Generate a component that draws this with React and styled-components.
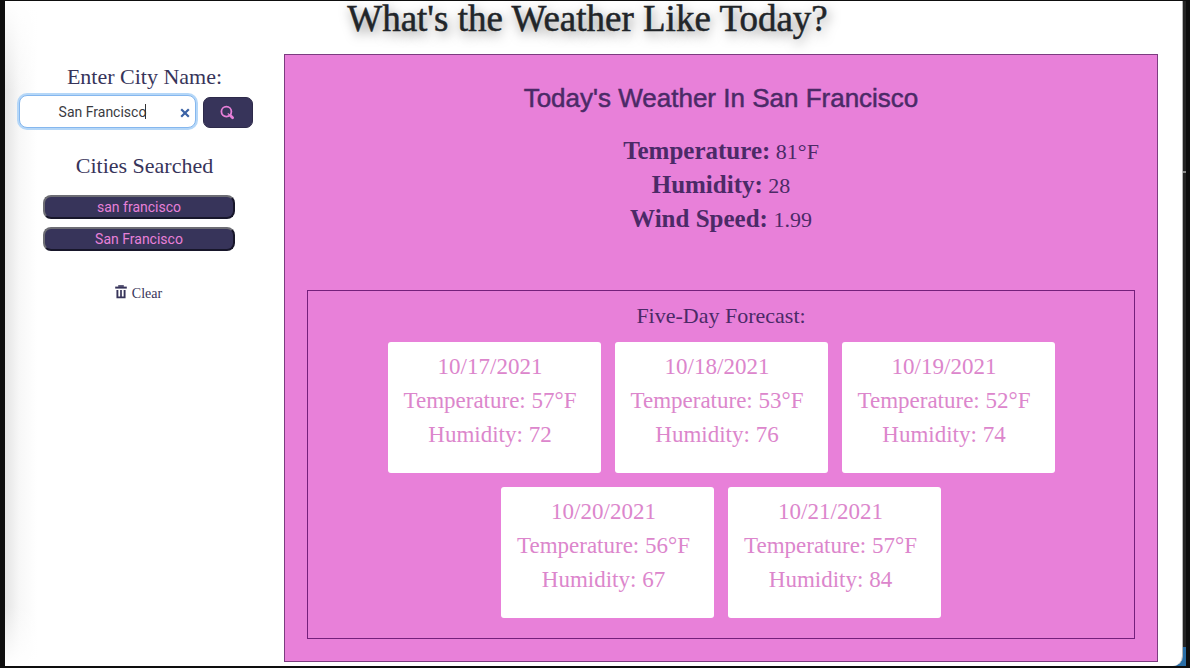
import React, { useState } from "react";
import styled, { createGlobalStyle } from "styled-components";

const serif = `Georgia, "Liberation Serif", serif`;
const sans = `Roboto, "Liberation Sans", sans-serif`;
const ink = "#37345a";
const pink = "#e880d9";
const plum = "#4b2a67";

const GlobalStyle = createGlobalStyle`
  *, *::before, *::after { box-sizing: border-box; }
  body { margin: 0; background: #0e0e0e; font-family: ${serif}; color: ${ink}; }
  h1, h2, h3, p, ul { margin: 0; padding: 0; font-weight: 400; }
  button, input { font: inherit; }
`;

const Desktop = styled.div`
  min-height: 100vh;
  display: flex;
  padding: 1px 4px 2px 5px;
  background: #0e0e0e;
`;

const Backdrop = styled.div`
  flex: 1;
  display: flex;
  padding-right: 3px;
  background: linear-gradient(to top, #2a6ea6 19px, #242424 19px);
`;

const Window = styled.div`
  flex: 1;
  border-right: 1px solid #b5b5b5;
  border-bottom-right-radius: 10px;
  background:
    linear-gradient(to top, #fff, rgba(255, 255, 255, 0) 60px),
    linear-gradient(to bottom, #fff, rgba(255, 255, 255, 0) 90px),
    linear-gradient(to right, #e4e4e4, #f7f7f7 14px, #fff 32px),
    #fff;
`;

const Edge = styled.span`
  position: absolute;
  right: 4px;
  top: 171px;
  width: 3px;
  height: 2px;
  background: #8a8a8a;
`;

const Title = styled.h1`
  padding-right: 12px;
  margin-bottom: 17px;
  text-align: center;
  font-size: 37px;
  line-height: 36px;
  color: #212529;
  -webkit-text-stroke: 0.5px #212529;
  text-shadow: 2px 4px 12px rgba(0, 0, 0, 0.5);
`;

const Columns = styled.div`
  display: grid;
  grid-template-columns: 279px 1fr;
  padding: 0 24px 4px 0;
`;

const Sidebar = styled.aside`
  padding-top: 10px;
  text-align: center;
`;

const Heading = styled.h3`
  font-size: 22px;
  line-height: 26px;
`;

const Label = styled(Heading).attrs({ as: "label", htmlFor: "city" })`
  display: block;
`;

const SearchForm = styled.form`
  display: flex;
  align-items: flex-end;
  gap: 7px;
  margin: 5px 0 25px 14px;
`;

const Field = styled.div`
  position: relative;
  width: 177px;
`;

const CityInput = styled.input`
  display: block;
  width: 100%;
  height: 33px;
  padding: 0 24px 0 14px;
  border: 1px solid #85b7ee;
  border-radius: 8px;
  outline: none;
  background: #fff;
  box-shadow: 0 0 0 2px #b5d7f8;
  text-align: center;
  font-family: ${sans};
  font-size: 14px;
  color: #3b3b3f;
`;

const Caret = styled.span`
  position: absolute;
  left: 126px;
  top: 9px;
  width: 1px;
  height: 15px;
  background: #333;
`;

const ClearInput = styled.button`
  position: absolute;
  right: 6px;
  top: 13px;
  display: flex;
  padding: 0;
  border: 0;
  background: none;
  color: #3b62a5;
`;

const SearchButton = styled.button`
  display: flex;
  align-items: center;
  justify-content: center;
  width: 50px;
  height: 31px;
  padding: 0;
  border: 1px solid #2d2a4a;
  border-radius: 7px;
  background: ${ink};
  color: ${pink};
`;

const History = styled.ul`
  display: flex;
  flex-direction: column;
  gap: 8px;
  width: 192px;
  margin: 16px 0 34px 38px;
  list-style: none;
`;

const HistoryButton = styled.button`
  display: block;
  width: 100%;
  height: 24px;
  padding: 0;
  border: 2px solid;
  border-color: #6d6d74 #17162a #17162a #6d6d74;
  border-radius: 8px;
  background: ${ink};
  font-family: ${sans};
  font-size: 14px;
  line-height: 18px;
  color: ${pink};
`;

const ClearButton = styled.button`
  display: inline-flex;
  align-items: flex-start;
  gap: 5px;
  margin-right: 12px;
  padding: 0;
  border: 0;
  background: none;
  font-size: 14px;
  line-height: 18px;
  color: ${ink};
`;

const Panel = styled.main`
  padding: 27px 22px 22px;
  border: 1px solid #7c3c80;
  background: ${pink};
  text-align: center;
  color: ${plum};
`;

const CurrentTitle = styled.h2`
  margin-bottom: 21px;
  font-family: "Liberation Sans", sans-serif;
  font-size: 26px;
  line-height: 32px;
  -webkit-text-stroke: 0.5px ${plum};
`;

const Reading = styled.p`
  font-size: 22px;
  line-height: 34px;

  strong { font-size: 25px; line-height: 32px; }
`;

const Forecast = styled.section`
  margin-top: 53px;
  padding: 12px 22px 20px;
  border: 1px solid #74207c;
`;

const Cards = styled.div`
  display: flex;
  flex-wrap: wrap;
  justify-content: center;
  gap: 14px;
  margin-top: 13px;
`;

const Card = styled.article`
  width: 213px;
  padding: 8px 20px 21px 12px;
  border-radius: 3px;
  background: #fff;
  font-size: 23px;
  line-height: 34px;
  white-space: nowrap;
  color: #dc86cc;
`;

const readings = [
  ["Temperature", "81°F"],
  ["Humidity", "28"],
  ["Wind Speed", "1.99"],
];

const days = [
  ["10/17/2021", "57°F", 72],
  ["10/18/2021", "53°F", 76],
  ["10/19/2021", "52°F", 74],
  ["10/20/2021", "56°F", 67],
  ["10/21/2021", "57°F", 84],
];

const CrossIcon = () => (
  <svg width="10" height="10" viewBox="0 0 10 10" fill="none" stroke="currentColor" strokeWidth="2.2">
    <path d="M1.2 1.2 8.8 8.8M8.8 1.2 1.2 8.8" />
  </svg>
);

const SearchIcon = () => (
  <svg width="16" height="16" viewBox="0 0 16 16" fill="none" stroke="currentColor">
    <circle cx="6.4" cy="6.6" r="5" strokeWidth="1.8" />
    <path d="M7.8 8.4 9.6 10.2" strokeWidth="1.2" />
    <path d="m10.4 10.6 2.2 2.2" strokeWidth="2.8" strokeLinecap="round" />
  </svg>
);

const TrashIcon = () => (
  <svg width="12" height="14" viewBox="0 0 12 14" fill="none" stroke="currentColor">
    <path d="M.2 2.6h11.6" strokeWidth="2" />
    <path d="M3.2 1h5.6" strokeWidth="1.6" />
    <path d="M2.4 5v7.4h7.2V5" strokeWidth="1.9" />
    <path d="M6 5v7.4" strokeWidth="1.7" />
  </svg>
);

export default function App() {
  const [city, setCity] = useState("San Francisco");
  return (
    <>
      <GlobalStyle />
      <Desktop>
        <Backdrop>
          <Window>
            <Title>What's the Weather Like Today?</Title>
            <Columns>
              <Sidebar>
                <Label>Enter City Name:</Label>
                <SearchForm onSubmit={(e) => e.preventDefault()}>
                  <Field>
                    <CityInput id="city" value={city} onChange={(e) => setCity(e.target.value)} />
                    {city === "San Francisco" && <Caret />}
                    <ClearInput type="button" aria-label="Clear text" onClick={() => setCity("")}>
                      <CrossIcon />
                    </ClearInput>
                  </Field>
                  <SearchButton aria-label="Search"><SearchIcon /></SearchButton>
                </SearchForm>
                <Heading>Cities Searched</Heading>
                <History>
                  {["san francisco", "San Francisco"].map((name) => (
                    <li key={name}>
                      <HistoryButton onClick={() => setCity(name)}>{name}</HistoryButton>
                    </li>
                  ))}
                </History>
                <ClearButton><TrashIcon />Clear</ClearButton>
              </Sidebar>
              <Panel>
                <CurrentTitle>Today's Weather In San Francisco</CurrentTitle>
                {readings.map(([name, value]) => (
                  <Reading key={name}><strong>{name}:</strong> {value}</Reading>
                ))}
                <Forecast>
                  <Heading>Five-Day Forecast:</Heading>
                  <Cards>
                    {days.map(([date, temp, humidity]) => (
                      <Card key={date}>
                        <p>{date}</p>
                        <p>Temperature: {temp}</p>
                        <p>Humidity: {humidity}</p>
                      </Card>
                    ))}
                  </Cards>
                </Forecast>
              </Panel>
            </Columns>
          </Window>
        </Backdrop>
        <Edge />
      </Desktop>
    </>
  );
}
